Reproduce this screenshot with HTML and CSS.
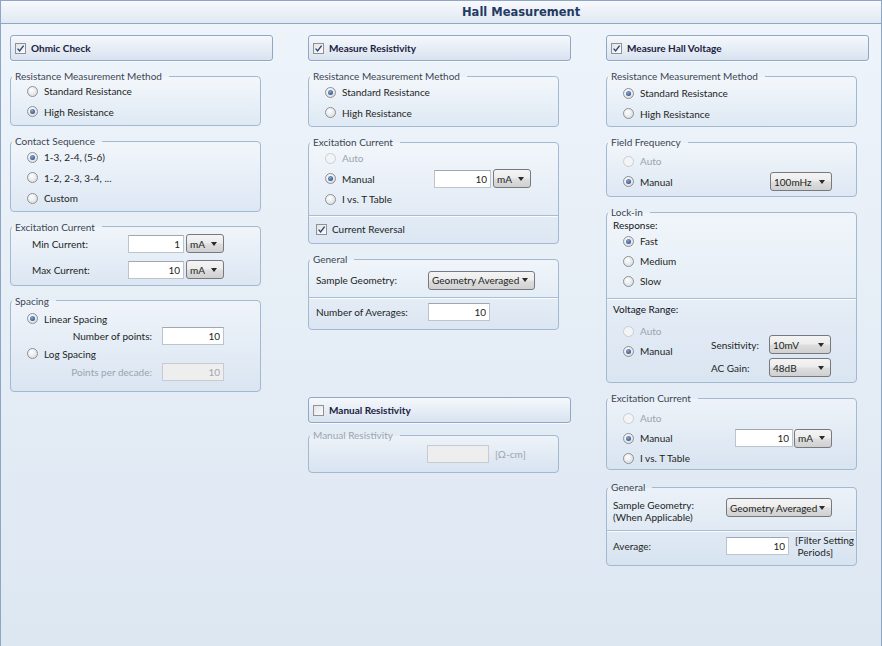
FILE: index.html
```html
<!DOCTYPE html>
<html lang="en">
<head>
<meta charset="UTF-8">
<title>Hall Measurement</title>
<link rel="stylesheet" href="styles.css">
</head>
<body>

<div class="window">
  <div class="titlebar">Hall Measurement</div>

  <div class="columns">

    <!-- Ohmic check -->
    <div class="col">
      <div class="head"><span class="cb on"><svg viewBox="0 0 9 9"><path d="M1.6 4.6 L3.6 6.9 L7.6 1.6"/></svg></span>Ohmic Check</div>

      <fieldset class="grp pb3">
        <legend>Resistance Measurement Method</legend>
        <div class="opt"><span class="rb"></span>Standard Resistance</div>
        <div class="opt"><span class="rb on"></span>High Resistance</div>
      </fieldset>

      <fieldset class="grp pt1 pb2">
        <legend>Contact Sequence</legend>
        <div class="opt"><span class="rb on"></span>1-3, 2-4, (5-6)</div>
        <div class="opt"><span class="rb"></span>1-2, 2-3, 3-4, ...</div>
        <div class="opt"><span class="rb"></span>Custom</div>
      </fieldset>

      <fieldset class="grp pb2">
        <legend>Excitation Current</legend>
        <div class="frow cur first">
          <span class="lbl w96">Min Current:</span>
          <input class="tb w56" type="text" value="1" readonly>
          <span class="combo w38">mA</span>
        </div>
        <div class="frow cur">
          <span class="lbl w96">Max Current:</span>
          <input class="tb w56" type="text" value="10" readonly>
          <span class="combo w38">mA</span>
        </div>
      </fieldset>

      <fieldset class="grp spacing">
        <legend>Spacing</legend>
        <div class="opt h18"><span class="rb on"></span>Linear Spacing</div>
        <div class="frow right h16">
          <span>Number of points:</span>
          <input class="tb w62" type="text" value="10" readonly>
        </div>
        <div class="opt h20"><span class="rb"></span>Log Spacing</div>
        <div class="frow right h16 off">
          <span>Points per decade:</span>
          <input class="tb w62" type="text" value="10" readonly disabled>
        </div>
      </fieldset>
    </div>

    <!-- Resistivity -->
    <div class="col">
      <div class="head"><span class="cb on"><svg viewBox="0 0 9 9"><path d="M1.6 4.6 L3.6 6.9 L7.6 1.6"/></svg></span>Measure Resistivity</div>

      <fieldset class="grp pt1 pb3">
        <legend>Resistance Measurement Method</legend>
        <div class="opt"><span class="rb on"></span>Standard Resistance</div>
        <div class="opt"><span class="rb"></span>High Resistance</div>
      </fieldset>

      <fieldset class="grp pt1 pb4">
        <legend>Excitation Current</legend>
        <div class="opt off"><span class="rb"></span>Auto</div>
        <div class="opt pr27"><span class="rb on"></span>Manual
          <input class="tb w57 push" type="text" value="10" readonly>
          <span class="combo w38 g2">mA</span>
        </div>
        <div class="opt"><span class="rb"></span>I vs. T Table</div>
        <div class="sep s-exc"></div>
        <div class="cbrow"><span class="cb on"><svg viewBox="0 0 9 9"><path d="M1.6 4.6 L3.6 6.9 L7.6 1.6"/></svg></span>Current Reversal</div>
      </fieldset>

      <fieldset class="grp pt6 pb7">
        <legend>General</legend>
        <div class="frow h20 pl7">
          <span class="lbl w112">Sample Geometry:</span>
          <span class="combo w107">Geometry Averaged</span>
        </div>
        <div class="sep s-gen"></div>
        <div class="frow h20 pl7">
          <span class="lbl w112">Number of Averages:</span>
          <input class="tb w62" type="text" value="10" readonly>
        </div>
      </fieldset>

      <div class="head manual"><span class="cb"></span>Manual Resistivity</div>

      <fieldset class="grp off mres">
        <legend>Manual Resistivity</legend>
        <div class="frow h22 pl118">
          <input class="tb w62" type="text" value="" readonly disabled>
          <span class="unit">[Ω-cm]</span>
        </div>
      </fieldset>
    </div>

    <!-- Hall voltage -->
    <div class="col">
      <div class="head"><span class="cb on"><svg viewBox="0 0 9 9"><path d="M1.6 4.6 L3.6 6.9 L7.6 1.6"/></svg></span>Measure Hall Voltage</div>

      <fieldset class="grp pt2 pb2">
        <legend>Resistance Measurement Method</legend>
        <div class="opt"><span class="rb on"></span>Standard Resistance</div>
        <div class="opt"><span class="rb"></span>High Resistance</div>
      </fieldset>

      <fieldset class="grp pt4 pb4">
        <legend>Field Frequency</legend>
        <div class="opt off"><span class="rb"></span>Auto</div>
        <div class="opt pr24"><span class="rb on"></span>Manual
          <span class="combo w62 push">100mHz</span>
        </div>
      </fieldset>

      <fieldset class="grp pt1 pb1">
        <legend>Lock-in</legend>
        <div class="sub">Response:</div>
        <div class="opt h20"><span class="rb on"></span>Fast</div>
        <div class="opt h20"><span class="rb"></span>Medium</div>
        <div class="opt h20"><span class="rb"></span>Slow</div>
        <div class="sep s-lock"></div>
        <div class="sub vr">Voltage Range:</div>
        <div class="range">
          <div class="range-opts">
            <div class="opt h20 off"><span class="rb"></span>Auto</div>
            <div class="opt h20"><span class="rb on"></span>Manual</div>
          </div>
          <div class="range-sets">
            <div class="frow h23"><span class="lbl w58">Sensitivity:</span><span class="combo w62">10mV</span></div>
            <div class="frow h23"><span class="lbl w58">AC Gain:</span><span class="combo w62">48dB</span></div>
          </div>
        </div>
      </fieldset>

      <fieldset class="grp pt5 pb1">
        <legend>Excitation Current</legend>
        <div class="opt h20 off"><span class="rb"></span>Auto</div>
        <div class="opt h20 pr24"><span class="rb on"></span>Manual
          <input class="tb w58 push" type="text" value="10" readonly>
          <span class="combo w38 g1">mA</span>
        </div>
        <div class="opt h20"><span class="rb"></span>I vs. T Table</div>
      </fieldset>

      <fieldset class="grp pt7 pb6 gen3">
        <legend>General</legend>
        <div class="frow top h24 pl6">
          <span class="lbl w113 two">Sample Geometry:<br>(When Applicable)</span>
          <span class="combo w106 up1">Geometry Averaged</span>
        </div>
        <div class="sep s-gen3"></div>
        <div class="frow h26 pl6">
          <span class="lbl w113">Average:</span>
          <input class="tb w63" type="text" value="10" readonly>
          <span class="note">[Filter Setting<br>&nbsp;Periods]</span>
        </div>
      </fieldset>
    </div>

  </div>
</div>

</body>
</html>
```

FILE: styles.css
```css
* {
  box-sizing: border-box;
}

body {
  margin: 0;
  font-family: Lato, "Liberation Sans", sans-serif;
  font-size: 10px;
  color: #1d1f24;
}

.window {
  width: 882px;
  height: 646px;
  border: 1px solid #8ea6c6;
  border-bottom: none;
  background: linear-gradient(#eef4fa, #dde7f2);
  overflow: hidden;
}

.titlebar {
  height: 23px;
  padding-left: 461px;
  border-bottom: 1px solid #8ea6c6;
  background: linear-gradient(#f7f9fc, #e0e8f2);
  font-family: "DejaVu Sans", sans-serif;
  font-weight: bold;
  font-size: 11.5px;
  line-height: 22px;
  color: #233a63;
}

.columns {
  display: flex;
  gap: 35px;
  padding: 11px 0 0 9px;
}

.col {
  width: 263px;
  display: flex;
  flex-direction: column;
  gap: 10px;
}

/* section header bars */
.head {
  height: 26px;
  display: flex;
  align-items: center;
  gap: 5px;
  padding-left: 4px;
  border: 1px solid #8fa8c7;
  border-radius: 3px;
  background: linear-gradient(#f5f8fc, #d8e3f0);
  box-shadow: 0 1px 0 rgba(255, 255, 255, 0.7);
  font-weight: bold;
  color: #1b213d;
}

.head.manual {
  margin-top: 57px;
}

/* group boxes */
.grp {
  width: 251px;
  min-width: 0;
  margin: 0;
  padding: 0;
  border: 1px solid #a3b8d1;
  border-radius: 4px;
  background: linear-gradient(rgba(255, 255, 255, 0.35), rgba(200, 216, 236, 0.35));
}

.grp legend {
  margin-left: 1px;
  padding: 0 7px 0 3px;
  font-size: 10px;
  line-height: 10px;
  color: #3b4553;
}

.grp.off legend,
.off {
  color: #9ba4ae;
}

.pt1 { padding-top: 1px; }
.pt2 { padding-top: 2px; }
.pt4 { padding-top: 4px; }
.pt5 { padding-top: 5px; }
.pt6 { padding-top: 6px; }
.pt7 { padding-top: 7px; }
.pb1 { padding-bottom: 1px; }
.pb2 { padding-bottom: 2px; }
.pb3 { padding-bottom: 3px; }
.pb4 { padding-bottom: 4px; }
.pb6 { padding-bottom: 6.5px; }
.pb7 { padding-bottom: 7px; }

.spacing {
  padding: 4px 0 11px;
}

.mres {
  margin-top: -3px;
  padding: 3px 0 7px;
}

.gen3 {
  margin-top: 2px;
}

/* radio rows */
.opt {
  height: 20.5px;
  display: flex;
  align-items: center;
  gap: 6px;
  padding-left: 16px;
}

.h16 { height: 16px; }
.h18 { height: 18px; }
.h20 { height: 20px; }
.h22 { height: 22px; }
.h23 { height: 23px; }
.h24 { height: 24px; }
.h26 { height: 26px; }

.pr24 { padding-right: 24px; }
.pr27 { padding-right: 27px; }
.pl6 { padding-left: 6px; }
.pl7 { padding-left: 7px; }
.pl118 { padding-left: 118px; }

.opt .push {
  margin-left: auto;
}

.opt .g1 {
  margin-left: -5px;
}

.opt .g2 {
  margin-left: -4px;
}

/* radio button */
.rb {
  width: 11px;
  height: 11px;
  flex: none;
  display: flex;
  align-items: center;
  justify-content: center;
  border: 1px solid #8d9198;
  border-radius: 50%;
  background: radial-gradient(circle at 40% 35%, #ffffff, #d3d6da);
}

.rb.on::after {
  content: "";
  width: 5px;
  height: 5px;
  border-radius: 50%;
  background: radial-gradient(circle at 40% 35%, #86a8d8, #1c3b72);
}

.off .rb {
  border-color: #c9ced4;
  background: #f3f4f6;
}

/* checkbox */
.cb {
  width: 11px;
  height: 11px;
  flex: none;
  display: flex;
  border: 1px solid #8e9297;
  background: linear-gradient(135deg, #e2e4e7, #fbfbfc);
}

.cb svg {
  width: 9px;
  height: 9px;
}

.cb path {
  fill: none;
  stroke: #2d4674;
  stroke-width: 1.4;
}

.cbrow {
  height: 20px;
  display: flex;
  align-items: center;
  gap: 5px;
  padding-left: 7px;
}

/* label + field rows */
.frow {
  display: flex;
  align-items: center;
}

.frow.top {
  align-items: flex-start;
}

.frow.cur {
  height: 26px;
  padding-left: 21px;
}

.frow.cur.first {
  margin-top: -1px;
}

.frow.cur .combo {
  margin-left: 2px;
}

.frow.right {
  justify-content: flex-end;
  gap: 10px;
  padding-right: 36px;
}

.lbl {
  flex: none;
}

.lbl.two {
  line-height: 12px;
}

.w38 { width: 38px; }
.w56 { width: 56px; }
.w57 { width: 57px; }
.w58 { width: 58px; }
.w62 { width: 62px; }
.w63 { width: 63px; }
.w96 { width: 96px; }
.w106 { width: 106px; }
.w107 { width: 107px; }
.w112 { width: 112px; }
.w113 { width: 113px; }

.tb {
  height: 18px;
  margin: 0;
  padding: 0 3px 0 0;
  border: 1px solid #bcc4ce;
  border-top-color: #9ea8b5;
  border-radius: 0;
  background: #fff;
  font: inherit;
  color: #1d1f24;
  text-align: right;
  outline: none;
}

.tb:disabled {
  background: #eeeeee;
  border-color: #c7ccd2;
  color: #a0a6ad;
}

.combo {
  height: 19px;
  flex: none;
  display: flex;
  align-items: center;
  justify-content: space-between;
  padding: 0 6px 0 3px;
  border: 1px solid #767a80;
  border-radius: 3px;
  background: linear-gradient(#f4f4f4 0%, #ececec 48%, #dedede 52%, #d0d0d0 100%);
  color: #1d1f24;
}

.combo::after {
  content: "";
  border-left: 3.5px solid transparent;
  border-right: 3.5px solid transparent;
  border-top: 4px solid #2a2a2a;
}

.combo.up1 {
  margin-top: -1px;
}

/* separators */
.sep {
  height: 1px;
  background: #a8bcd4;
  box-shadow: 0 1px 0 rgba(255, 255, 255, 0.8);
}

.s-exc {
  margin: 5px 0 3.5px;
}

.s-gen {
  margin: 6.5px 0 4.5px;
}

.s-lock {
  margin: 7px 0 0;
}

.s-gen3 {
  margin: 6.5px 0 2px;
}

/* lock-in block */
.sub {
  height: 13px;
  display: flex;
  align-items: center;
  padding-left: 6px;
  color: #111318;
}

.sub.vr {
  height: 12px;
  margin-top: 4px;
}

.range {
  height: 66px;
  display: flex;
}

.range-opts {
  width: 104px;
  padding-top: 6px;
}

.range-sets {
  padding-top: 18px;
}

.unit {
  margin-left: 6px;
  color: #9ba4ae;
}

.note {
  margin-left: 6px;
  line-height: 12px;
}
```
